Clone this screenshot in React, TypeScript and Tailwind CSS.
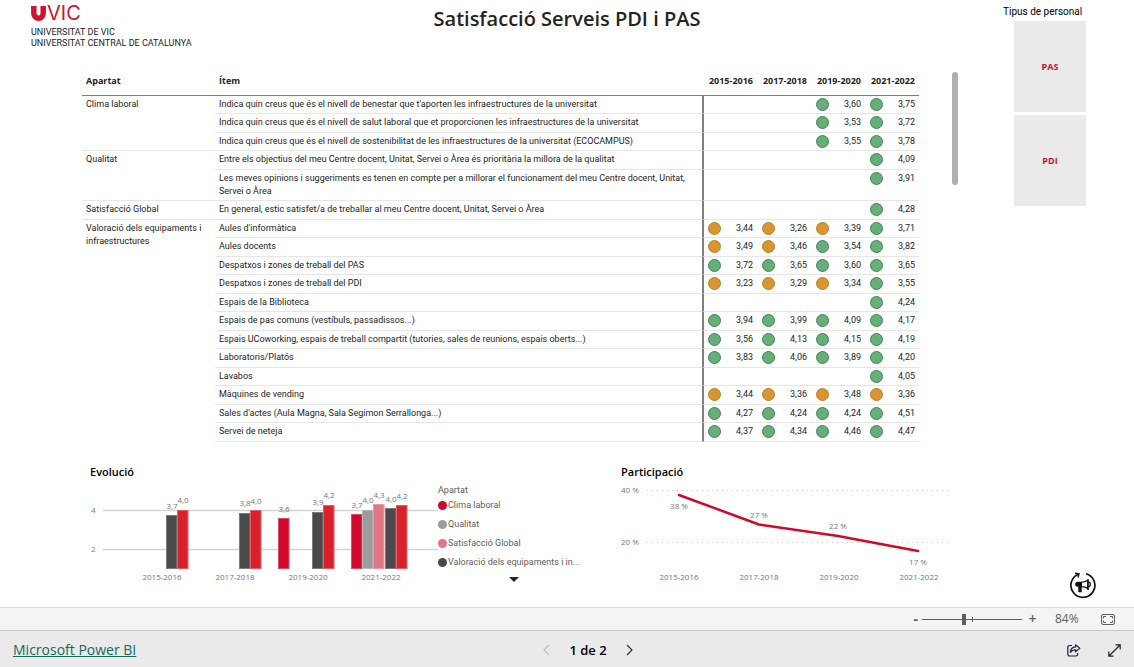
import React from "react";

type Row = { item: string; values: (string | null)[] };
type Group = { name: string; rows: Row[] };

const YEARS = ["2015-2016", "2017-2018", "2019-2020", "2021-2022"];

const GROUPS: Group[] = [
  {
    name: "Clima laboral",
    rows: [
      { item: "Indica quin creus que és el nivell de benestar que t'aporten les infraestructures de la universitat", values: [null, null, "3,60", "3,75"] },
      { item: "Indica quin creus que és el nivell de salut laboral que et proporcionen les infraestructures de la universitat", values: [null, null, "3,53", "3,72"] },
      { item: "Indica quin creus que és el nivell de sostenibilitat de les infraestructures de la universitat (ECOCAMPUS)", values: [null, null, "3,55", "3,78"] },
    ],
  },
  {
    name: "Qualitat",
    rows: [
      { item: "Entre els objectius del meu Centre docent, Unitat, Servei o Àrea és prioritària la millora de la qualitat", values: [null, null, null, "4,09"] },
      { item: "Les meves opinions i suggeriments es tenen en compte per a millorar el funcionament del meu Centre docent, Unitat, Servei o Àrea", values: [null, null, null, "3,91"] },
    ],
  },
  {
    name: "Satisfacció Global",
    rows: [{ item: "En general, estic satisfet/a de treballar al meu Centre docent, Unitat, Servei o Àrea", values: [null, null, null, "4,28"] }],
  },
  {
    name: "Valoració dels equipaments i infraestructures",
    rows: [
      { item: "Aules d'informàtica", values: ["3,44", "3,26", "3,39", "3,71"] },
      { item: "Aules docents", values: ["3,49", "3,46", "3,54", "3,82"] },
      { item: "Despatxos i zones de treball del PAS", values: ["3,72", "3,65", "3,60", "3,65"] },
      { item: "Despatxos i zones de treball del PDI", values: ["3,23", "3,29", "3,34", "3,55"] },
      { item: "Espais de la Biblioteca", values: [null, null, null, "4,24"] },
      { item: "Espais de pas comuns (vestíbuls, passadissos...)", values: ["3,94", "3,99", "4,09", "4,17"] },
      { item: "Espais UCoworking, espais de treball compartit (tutories, sales de reunions, espais oberts...)", values: ["3,56", "4,13", "4,15", "4,19"] },
      { item: "Laboratoris/Platós", values: ["3,83", "4,06", "3,89", "4,20"] },
      { item: "Lavabos", values: [null, null, null, "4,05"] },
      { item: "Màquines de vending", values: ["3,44", "3,36", "3,48", "3,36"] },
      { item: "Sales d'actes (Aula Magna, Sala Segimon Serrallonga...)", values: ["4,27", "4,24", "4,24", "4,51"] },
      { item: "Servei de neteja", values: ["4,37", "4,34", "4,46", "4,47"] },
    ],
  },
];

function Score({ value }: { value: string }) {
  const good = parseFloat(value.replace(",", ".")) >= 3.5;
  return (
    <div className="flex items-center justify-between">
      <span
        className={
          good
            ? "size-[13px] rounded-full border border-[#4a7f5b] bg-[#64b077]"
            : "size-[13px] rounded-full border border-[#b58032] bg-[#d9962f]"
        }
      />
      <span>{value}</span>
    </div>
  );
}

function ScoreTable() {
  return (
    <table className="w-full table-fixed border-separate border-spacing-0 text-left text-[9px] leading-[13px] text-[#252423]">
      <colgroup>
        <col className="w-[133px]" />
        <col />
        <col className="w-[54px]" />
        <col className="w-[54px]" />
        <col className="w-[54px]" />
        <col className="w-[54px]" />
      </colgroup>
      <thead>
        <tr className="h-[25px]">
          <th scope="col" className="border-b border-[#808080] px-1 pb-[6px] font-bold">Apartat</th>
          <th scope="col" className="border-b border-[#808080] px-1 pb-[6px] font-bold">Ítem</th>
          {YEARS.map((y) => (
            <th key={y} scope="col" className="whitespace-nowrap border-b border-[#808080] pb-[6px] pr-1 text-right font-bold">{y}</th>
          ))}
        </tr>
      </thead>
      <tbody className="font-['Roboto','Open_Sans',sans-serif]">
        {GROUPS.map((g, gi) =>
          g.rows.map((r, ri) => (
            <tr key={r.item} className="h-[18px] align-top even:h-[19px]">
              {ri === 0 && (
                <th
                  scope="rowgroup"
                  rowSpan={g.rows.length}
                  className={
                    gi < GROUPS.length - 1
                      ? "border-b border-[#e6e6e6] px-1 pt-[2px] font-normal"
                      : "px-1 pt-[2px] font-normal"
                  }
                >
                  {g.name}
                </th>
              )}
              <td className="border-b border-r border-b-[#e6e6e6] border-r-[#808080] px-1 py-[2px]">{r.item}</td>
              {r.values.map((v, vi) => (
                <td
                  key={vi}
                  className={
                    vi === 0
                      ? "border-b border-l border-b-[#e6e6e6] border-l-[#808080] px-1 py-[2px]"
                      : "border-b border-[#e6e6e6] py-[2px] pl-[5px] pr-1"
                  }
                >
                  {v && <Score value={v} />}
                </td>
              ))}
            </tr>
          )),
        )}
      </tbody>
    </table>
  );
}

const BARS = [
  { x: 76, top: 51, fill: "#4a4a4a", label: "3,7", ly: 45 },
  { x: 87, top: 46, fill: "#d9212b", label: "4,0", ly: 39 },
  { x: 149, top: 49, fill: "#4a4a4a", label: "3,8", ly: 42 },
  { x: 160, top: 46, fill: "#d9212b", label: "4,0", ly: 40 },
  { x: 188, top: 54, fill: "#d0082c", label: "3,6", ly: 48 },
  { x: 222, top: 48, fill: "#4a4a4a", label: "3,9", ly: 41 },
  { x: 233, top: 41, fill: "#d9212b", label: "4,2", ly: 34 },
  { x: 261, top: 50, fill: "#d0082c", label: "3,7", ly: 44 },
  { x: 272, top: 46, fill: "#9c9c9a", label: "4,0", ly: 39 },
  { x: 283, top: 40, fill: "#e07785", label: "4,3", ly: 34 },
  { x: 295, top: 44, fill: "#4a4a4a", label: "4,0", ly: 38 },
  { x: 306, top: 41, fill: "#d9212b", label: "4,2", ly: 35 },
];

function EvolutionChart() {
  return (
    <svg width="348" height="124" viewBox="0 0 348 124" className="shrink-0 text-[8px]" role="img" aria-label="Evolució">
      <path d="M13 46.5H348M13 85.5H348" stroke="#d4d4d4" strokeWidth="1.3" />
      <text x="1" y="49" fill="#3f8fb0">4</text>
      <text x="1" y="88" fill="#5f8c96">2</text>
      {BARS.map((b, i) => (
        <g key={i}>
          <rect x={b.x} y={b.top} width="11.4" height={105 - b.top} fill={b.fill} />
          <rect x={b.x + 0.5} y={b.top + 0.5} width="10.4" height={104 - b.top} fill="none" stroke="#fff" strokeOpacity="0.28" />
          <text x={b.x + 6} y={b.ly} textAnchor="middle" fill="#777">{b.label}</text>
        </g>
      ))}
      {YEARS.map((y, i) => (
        <text key={y} x={72 + i * 73} y="116" textAnchor="middle" fill="#777">{y}</text>
      ))}
    </svg>
  );
}

const LEGEND = [
  { dot: "size-[9px] shrink-0 rounded-full bg-[#d0082c]", name: "Clima laboral" },
  { dot: "size-[9px] shrink-0 rounded-full bg-[#9c9c9a]", name: "Qualitat" },
  { dot: "size-[9px] shrink-0 rounded-full bg-[#e07785]", name: "Satisfacció Global" },
  { dot: "size-[9px] shrink-0 rounded-full bg-[#4a4a4a]", name: "Valoració dels equipaments i in..." },
];

function ParticipationChart() {
  const labels = [
    { t: "38 %", x: 58, y: 45 },
    { t: "27 %", x: 138, y: 54 },
    { t: "22 %", x: 217, y: 65 },
    { t: "17 %", x: 297, y: 101 },
  ];
  return (
    <svg width="328" height="124" viewBox="0 0 328 124" className="text-[8px]" fill="#777" role="img" aria-label="Participació">
      <path d="M26 26.5H327M26 78.5H327" stroke="#d0d0d0" strokeDasharray="1 4" />
      <text x="0" y="29">40 %</text>
      <text x="0" y="81">20 %</text>
      <path d="M58 31L138 60.5L217 72L297 87" fill="none" stroke="#d0082c" strokeWidth="2.5" strokeLinejoin="round" strokeLinecap="round" />
      {labels.map((l) => (
        <text key={l.t} x={l.x} y={l.y} textAnchor="middle">{l.t}</text>
      ))}
      {YEARS.map((y, i) => (
        <text key={y} x={58 + i * 80} y="116" textAnchor="middle">{y}</text>
      ))}
    </svg>
  );
}

function Megaphone() {
  return (
    <svg width="28" height="28" viewBox="0 0 28 28" fill="none" stroke="#111" aria-hidden="true">
      <path d="M17 2.7A12 12 0 1 1 9.300 3.200" strokeWidth="1.700" />
      <path d="M6 2.300L10 2.800L9 6.500" strokeWidth="1.400" />
      <path d="M12.500 10.700H8.700A2.500 2.500 0 0 0 8.700 15.700H9.300V21.300H12.700V15.700Z" fill="#111" stroke="none" />
      <path d="M12.500 11.200C14.800 11.200 17 10.500 18.800 9.300V17.500C17 16.200 14.800 15.600 12.500 15.600Z" fill="#fff" strokeWidth="1.100" />
      <path d="M19 8.200V18.900" strokeWidth="1.500" />
      <path d="M19.500 11.200C21.900 11.200 21.900 15.600 19.500 15.600" strokeWidth="1.200" />
    </svg>
  );
}

export default function App() {
  return (
    <div className="flex min-h-screen flex-col bg-white font-['Open_Sans','Noto_Sans',sans-serif] text-[#252423]">
      <main className="flex flex-1">
        <div className="flex flex-1 flex-col">
          <header className="grid h-[71px] grid-cols-[192px_1fr_61px] items-start">
            <div className="whitespace-nowrap pl-[31px] pt-1 text-[#222]">
              <div className="flex items-center gap-[1px] font-['Inter',sans-serif] text-[20px] leading-[18px] text-[#d0112f]">
                <svg width="15" height="15" viewBox="0 0 15 15" aria-hidden="true">
                  <path d="M2.800 0V7.500A4.700 4.700 0 0 0 12.200 7.500V0" fill="none" stroke="#d0112f" strokeWidth="5.400" />
                </svg>
                <span>VIC</span>
              </div>
              <div className="pt-[5px] font-['Roboto',sans-serif] text-[9px] leading-[11px]">
                UNIVERSITAT DE VIC
                <br />
                UNIVERSITAT CENTRAL DE CATALUNYA
              </div>
            </div>
            <h1 className="whitespace-nowrap pt-[7px] text-center text-[20px] font-semibold leading-6">Satisfacció Serveis PDI i PAS</h1>
          </header>

          <section className="flex gap-[33px] pl-[82px] pr-[45px]">
            <div className="min-w-0 flex-1">
              <ScoreTable />
            </div>
            <div className="mt-[1px] h-[113px] w-[6px] shrink-0 rounded-full bg-[#b0b0b0]" />
          </section>

          <div className="flex gap-[41px] pl-[90px] pt-[22px]">
            <section>
              <div className="flex">
                <div className="flex flex-col">
                  <h2 className="-mb-4 text-[11px] font-semibold leading-4 text-black">Evolució</h2>
                  <EvolutionChart />
                </div>
                <div className="w-[142px] pt-5 font-['Roboto','Open_Sans',sans-serif] text-[9px] leading-[13px] text-[#605e5c]">
                  <div>Apartat</div>
                  <ul className="flex flex-col gap-[6px] pt-[2px]">
                    {LEGEND.map((l) => (
                      <li key={l.name} className="flex items-center gap-[1px] whitespace-nowrap">
                        <span className={l.dot} />
                        {l.name}
                      </li>
                    ))}
                  </ul>
                  <svg width="10" height="6" viewBox="0 0 10 6" className="ml-[71px] mt-2" aria-hidden="true">
                    <path d="M0 0H10L5 5Z" fill="#252423" />
                  </svg>
                </div>
              </div>
            </section>
            <section className="flex flex-col">
              <h2 className="-mb-4 text-[11px] font-semibold leading-4 text-black">Participació</h2>
              <ParticipationChart />
            </section>
          </div>
        </div>

        <aside className="flex w-[131px] flex-col justify-between pb-2 pt-[5px]">
          <div>
            <div className="font-['Roboto','Open_Sans',sans-serif] text-[10px] leading-[14px] text-black">Tipus de personal</div>
            <div className="ml-[11px] mt-[2px] flex w-[72px] flex-col gap-[3px] text-[9px] font-bold text-[#c8102e]">
              <button type="button" className="h-[91px] bg-[#eaeaea]">PAS</button>
              <button type="button" className="h-[91px] bg-[#eaeaea]">PDI</button>
            </div>
          </div>
          <div className="ml-[66px]">
            <Megaphone />
          </div>
        </aside>
      </main>

      <div className="flex h-[23px] items-center justify-end border-t border-[#dcdcdc] bg-[#f4f4f4] pr-[19px] text-[12px] text-[#605e5c]">
        <button type="button" aria-label="Allunya" className="w-[13px] pr-1 text-right text-[14px] font-bold leading-4">-</button>
        <div className="relative flex w-[100px] items-center">
          <input
            type="range"
            aria-label="Zoom"
            min={0}
            max={100}
            defaultValue={42}
            className="h-[11px] w-full appearance-none bg-[linear-gradient(#605e5c,#605e5c)] bg-[length:100%_1px] bg-center bg-no-repeat [&::-webkit-slider-thumb]:h-[11px] [&::-webkit-slider-thumb]:w-1 [&::-webkit-slider-thumb]:appearance-none [&::-webkit-slider-thumb]:bg-[#605e5c]"
          />
          <span className="absolute left-[50px] h-[5px] w-px bg-[#605e5c]" />
        </div>
        <button type="button" aria-label="Apropa" className="ml-[5px] w-[11px] text-[14px] font-semibold leading-4">+</button>
        <span className="w-[63px] pl-[17px]">84%</span>
        <button type="button" aria-label="Ajusta a la pàgina">
          <svg width="14" height="11" viewBox="0 0 14 11" fill="none" stroke="#605e5c" aria-hidden="true">
            <rect x="0.5" y="0.500" width="13" height="10" rx="1.500" />
            <path d="M5 2.500H2.500V4.500M9 2.500H11.500V4.500M5 8.500H2.500V6.500M9 8.500H11.500V6.500" />
          </svg>
        </button>
      </div>

      <footer className="grid h-[37px] grid-cols-[1fr_auto_1fr] items-center border-t border-[#c8c8c8] bg-[#eaeaea] px-[13px] pt-[2px]">
        <a href="#" className="text-[14px] leading-5 text-[#116b5c] underline">Microsoft Power BI</a>
        <nav className="flex items-center gap-[19px] pl-[42px] text-[13px] font-semibold leading-5 text-black">
          <button type="button" aria-label="Pàgina anterior" disabled>
            <svg width="7" height="12" viewBox="0 0 7 12" fill="none" stroke="#c0c0c0" strokeWidth="1.200" aria-hidden="true">
              <path d="M6 1L1 6L6 11" />
            </svg>
          </button>
          <span>1 de 2</span>
          <button type="button" aria-label="Pàgina següent">
            <svg width="7" height="12" viewBox="0 0 7 12" fill="none" stroke="#333" strokeWidth="1.200" aria-hidden="true">
              <path d="M1 1L6 6L1 11" />
            </svg>
          </button>
        </nav>
        <div className="flex items-center justify-end gap-[27px]">
          <button type="button" aria-label="Comparteix">
            <svg width="14" height="13" viewBox="0 0 14 13" fill="none" stroke="#2b1f3d" strokeWidth="1.200" aria-hidden="true">
              <path d="M5 1.500H2.500A1.700 1.700 0 0 0 0.800 3.200V10.300A1.700 1.700 0 0 0 2.500 12H9A1.700 1.700 0 0 0 10.700 10.300V9" />
              <path d="M8.500 0.800L12.800 4.300L8.500 7.800V5.800C6.200 5.800 4.500 6.500 3.300 8.400C3.500 5.300 5.200 3 8.500 2.800Z" strokeLinejoin="round" />
            </svg>
          </button>
          <button type="button" aria-label="Pantalla completa">
            <svg width="13" height="13" viewBox="0 0 13 13" fill="none" stroke="#222" strokeWidth="1.200" aria-hidden="true">
              <path d="M1 12L12 1M7.500 0.800H12.200V5.500M0.800 7.500V12.200H5.500" />
            </svg>
          </button>
        </div>
      </footer>
    </div>
  );
}
